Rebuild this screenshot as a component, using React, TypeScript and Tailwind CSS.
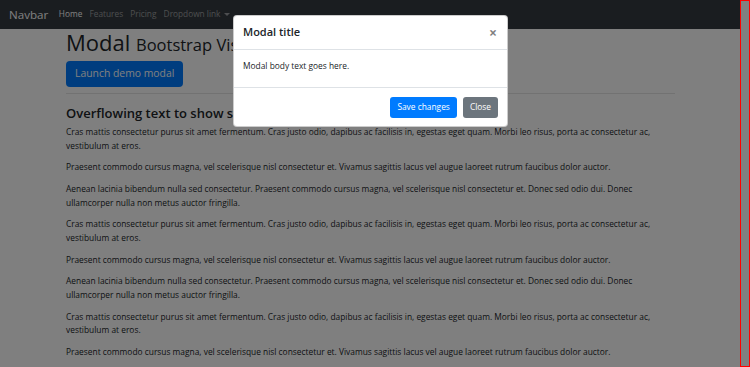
const paragraphs = [
    "Cras mattis consectetur purus sit amet fermentum. Cras justo odio, dapibus ac facilisis in, egestas eget quam. Morbi leo risus, porta ac consectetur ac, vestibulum at eros.",
    "Praesent commodo cursus magna, vel scelerisque nisl consectetur et. Vivamus sagittis lacus vel augue laoreet rutrum faucibus dolor auctor.",
    "Aenean lacinia bibendum nulla sed consectetur. Praesent commodo cursus magna, vel scelerisque nisl consectetur et. Donec sed odio dui. Donec ullamcorper nulla non metus auctor fringilla.",
];

const body = [...paragraphs, ...paragraphs, ...paragraphs];

function Navbar() {
    return (
        <nav className="h-[29px] bg-[#343a40] flex items-center px-[9px]">
            <span className="text-[11.6px] text-white mr-[7px]">Navbar</span>
            <ul className="flex items-center text-[8.3px]">
                <li className="px-[3.6px] text-white font-medium">Home</li>
                <li className="px-[3.6px] text-white/50">Features</li>
                <li className="px-[3.6px] text-white/50">Pricing</li>
                <li className="px-[3.6px] text-white/50 flex items-center gap-[4px]">
                    Dropdown link
                    <span className="inline-block w-0 h-0 border-x-[3px] border-x-transparent border-t-[3.5px] border-t-white/50" />
                </li>
            </ul>
        </nav>
    );
}

function Modal() {
    return (
        <div className="absolute left-[233px] top-[15px] w-[275px] bg-white rounded-[4px] border border-black/20 text-[#212529]">
            <div className="flex items-center justify-between px-[9px] h-[34px] border-b border-[#dee2e6]">
                <h5 className="text-[11px] font-semibold">Modal title</h5>
                <span className="text-[14px] font-bold leading-none text-black/50 mr-[1px]">×</span>
            </div>
            <div className="px-[9px] pt-[9px] pb-[9px] h-[38px] border-b border-[#dee2e6]">
                <p className="text-[8.4px] leading-[13.2px]">Modal body text goes here.</p>
            </div>
            <div className="flex items-center justify-end gap-[6px] px-[9px] h-[38px]">
                <button className="h-[21px] px-[7px] rounded-[3px] bg-[#007bff] text-white text-[8.4px]">Save changes</button>
                <button className="h-[21px] px-[7px] rounded-[3px] bg-[#6c757d] text-white text-[8.4px]">Close</button>
            </div>
        </div>
    );
}

export default function App() {
    return (
        <div className="flex h-[367px] w-[750px] overflow-hidden font-['Open_Sans',sans-serif]">
            <div className="relative flex-1 bg-white">
                <Navbar />
                <main className="w-[610px] mx-auto pl-[1px] text-[#212529]">
                    <h1 className="h-[26px] text-[22px] font-medium leading-[26px] mb-[4px]">
                        Modal <small className="text-[16.5px] font-normal leading-none">Bootstrap Visual Test</small>
                    </h1>
                    <button className="h-[26px] px-[9px] rounded-[4px] bg-[#007bff] text-white text-[10.4px]">Launch demo modal</button>
                    <hr className="mt-[6px] mb-[12px] border-black/10" />
                    <h4 className="text-[13px] font-semibold leading-[15.8px] mb-[3.6px]">Overflowing text to show scroll behavior</h4>
                    {body.map((text, i) => (
                        <p key={i} className="text-[8.4px] leading-[13.4px] mb-[8.4px]">{text}</p>
                    ))}
                </main>

                {/* backdrop */}
                <div className="absolute inset-0 bg-black/50" />
                <Modal />
            </div>
            <div className="w-[10px] h-full border border-[#ff0000] bg-[#808080]" />
        </div>
    );
}
